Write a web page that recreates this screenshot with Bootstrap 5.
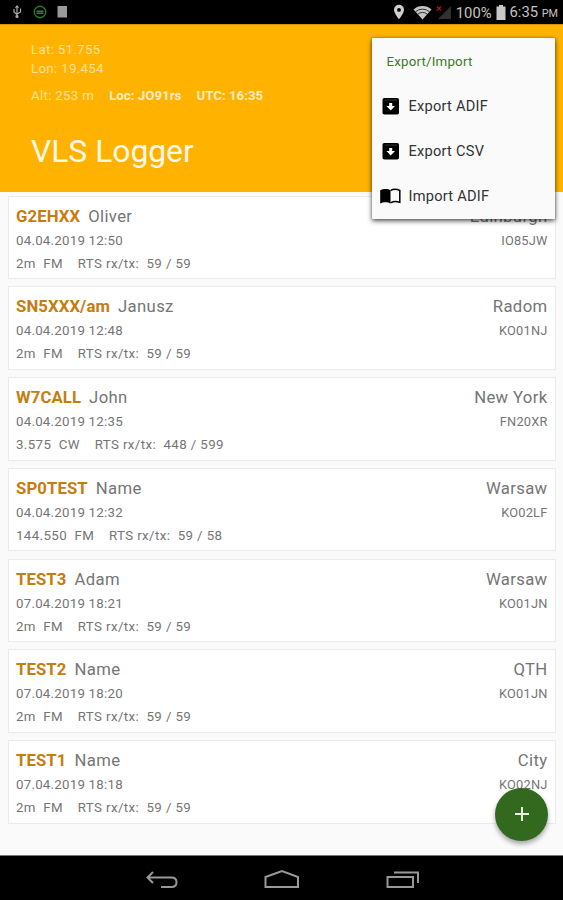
<!DOCTYPE html>
<html lang="en">
<head>
<meta charset="utf-8">
<meta name="viewport" content="width=device-width, initial-scale=1">
<title>VLS Logger</title>
<link href="https://cdn.jsdelivr.net/npm/bootstrap@5.3.0/dist/css/bootstrap.min.css" rel="stylesheet">
<style>
  body { font-family: Roboto, sans-serif; background: #fafafa; height: 900px; overflow: hidden; color: #757575; }
  svg { display: block; flex: none; }
  .statusbar { height: 24px; background: #000; color: #c4c4c4; font-size: 14.8px; line-height: 24px; padding: 0 5px 0 10px; }
  .statusbar .clock { padding-top: 1px; }
  .statusbar .battery-text { padding-top: 1px; }
  .statusbar .pm { font-size: 10.8px; }
  .app-head { height: 168px; background: #ffb300; padding: 15px 31px 0; color: #ffe09a; font-size: 13.3px; line-height: 19px; letter-spacing: .3px; border-top: 1px solid #d39400; }
  .app-head b { font-weight: 700; color: #ffecc0; letter-spacing: 0; }
  .app-head .position-line { margin-top: 8px; gap: 15px; }
  .app-title { font-size: 31.8px; line-height: 38px; color: #fff8e6; font-weight: 400; margin: 27px 0 0; letter-spacing: 0; }
  .log { padding: 3.5px 7.5px 0 8px; gap: 7.2px; height: 663px; }
  .entry { height: 83.6px; flex: none; background: #fff; border: 1px solid #ebebeb; padding: 7px 7px 0; font-size: 13.3px; letter-spacing: .35px; }
  .entry .top-line { font-size: 16.7px; line-height: 25px; }
  .entry .mid-line { line-height: 23px; }
  .entry .mid-line span:first-child { letter-spacing: .23px; }
  .entry .end-line { line-height: 23px; white-space: pre; letter-spacing: .39px; }
  .entry .locator { font-size: 12.8px; letter-spacing: .2px; }
  .call { color: #c67c0e; font-weight: 700; margin-right: 8px; letter-spacing: .12px; }
  .popmenu { left: 371.5px; top: 38px; width: 183.500px; height: 180.5px; background: #fafafa; border-radius: 1px; box-shadow: 0 2px 5px rgba(0,0,0,.65), 0 0 3px rgba(0,0,0,.25); color: #333; z-index: 3; font-size: 14.6px; letter-spacing: .25px; }
  .popmenu .heading { height: 46px; padding: 1px 0 0 15px; color: #3c7a2a; font-size: 13.3px; letter-spacing: .2px; }
  .popmenu .choice { height: 45px; padding-left: 7px; gap: 7px; }
  .popmenu .choice span { padding-top: 1px; }
  .popmenu .choice svg { margin-top: -1px; }
  .fab { left: 495px; top: 787.5px; width: 53px; height: 53px; background: #33691e; z-index: 2; box-shadow: 0 3px 5px rgba(0,0,0,.35); }
  .navkeys { height: 45px; background: #000; border-top: 1px solid #777; }
</style>
<script src="https://cdn.jsdelivr.net/npm/bootstrap@5.3.0/dist/js/bootstrap.bundle.min.js"></script>
</head>
<body class="position-relative d-flex flex-column m-0">
<header class="statusbar d-flex align-items-center">
  <svg width="14" height="14" viewBox="0 0 14 14" fill="none" stroke="#aaa" stroke-width="1.2"><path d="M7 1v11M4 4v3l3 2.5M10.500 3.500v3.500l-3.500 2"/><circle cx="7" cy="11.500" r="1" fill="#aaa"/><path d="M5.500 3 7 1l1.500 2"/></svg>
  <svg class="ms-2" width="16" height="14" viewBox="0 0 16 14" fill="none" stroke="#267a2b" stroke-width="1.400"><circle cx="8" cy="7" r="5.800"/><path d="M4.500 6.200h7M4.500 8.200h7" stroke="#47724a"/></svg>
  <svg class="ms-2" width="12" height="14" viewBox="0 0 12 14"><path d="M1.500 1h9.500v11.500H1.500z" fill="#999"/></svg>
  <svg class="ms-auto" width="12" height="16" viewBox="0 0 12 16"><path d="M6 .8a5 5 0 0 0-5 5C1 9.500 6 15.200 6 15.200s5-5.700 5-9.400a5 5 0 0 0-5-5zm0 3.200a1.900 1.900 0 1 1 0 3.800A1.900 1.900 0 0 1 6 4z" fill="#d0d0d0" fill-rule="evenodd"/></svg>
  <svg class="ms-2" width="19" height="15" viewBox="0 0 19 15"><path d="M.5 4.500a13.500 13.500 0 0 1 18 0L9.500 14.500z" fill="#c4c4c4"/><path d="M2.500 6.800a10.500 10.500 0 0 1 14 0M4.700 9.200a7.400 7.400 0 0 1 9.600 0" fill="none" stroke="#222" stroke-width=".9"/></svg>
  <svg class="ms-1" width="16" height="15" viewBox="0 0 16 15"><path d="M15 1v13H2z" fill="#303030"/><path d="M1 1.500l4 4m0-4-4 4" stroke="#a01818" stroke-width="1.400"/></svg>
  <span class="battery-text ms-1">100%</span>
  <svg class="ms-1" width="10" height="15" viewBox="0 0 10 15"><path d="M3 0h4v1.500h2.500V15H.5V1.500H3z" fill="#c8c8c8"/></svg>
  <span class="clock ms-1">6:35 <span class="pm">PM</span></span>
</header>

<section class="app-head">
  <div>Lat: 51.755</div>
  <div>Lon: 19.454</div>
  <div class="position-line d-flex"><span>Alt: 253 m</span><b>Loc: JO91rs</b><b>UTC: 16:35</b></div>
  <h1 class="app-title">VLS Logger</h1>
</section>

<main class="log d-flex flex-column">
  <article class="entry"><div class="top-line d-flex"><span class="call">G2EHXX</span><span>Oliver</span><span class="ms-auto">Edinburgh</span></div><div class="mid-line d-flex justify-content-between"><span>04.04.2019 12:50</span><span class="locator">IO85JW</span></div><div class="end-line">2m  FM    RTS rx/tx:  59 / 59</div></article>
  <article class="entry"><div class="top-line d-flex"><span class="call">SN5XXX/am</span><span>Janusz</span><span class="ms-auto">Radom</span></div><div class="mid-line d-flex justify-content-between"><span>04.04.2019 12:48</span><span class="locator">KO01NJ</span></div><div class="end-line">2m  FM    RTS rx/tx:  59 / 59</div></article>
  <article class="entry"><div class="top-line d-flex"><span class="call">W7CALL</span><span>John</span><span class="ms-auto">New York</span></div><div class="mid-line d-flex justify-content-between"><span>04.04.2019 12:35</span><span class="locator">FN20XR</span></div><div class="end-line">3.575  CW    RTS rx/tx:  448 / 599</div></article>
  <article class="entry"><div class="top-line d-flex"><span class="call">SP0TEST</span><span>Name</span><span class="ms-auto">Warsaw</span></div><div class="mid-line d-flex justify-content-between"><span>04.04.2019 12:32</span><span class="locator">KO02LF</span></div><div class="end-line">144.550  FM    RTS rx/tx:  59 / 58</div></article>
  <article class="entry"><div class="top-line d-flex"><span class="call">TEST3</span><span>Adam</span><span class="ms-auto">Warsaw</span></div><div class="mid-line d-flex justify-content-between"><span>07.04.2019 18:21</span><span class="locator">KO01JN</span></div><div class="end-line">2m  FM    RTS rx/tx:  59 / 59</div></article>
  <article class="entry"><div class="top-line d-flex"><span class="call">TEST2</span><span>Name</span><span class="ms-auto">QTH</span></div><div class="mid-line d-flex justify-content-between"><span>07.04.2019 18:20</span><span class="locator">KO01JN</span></div><div class="end-line">2m  FM    RTS rx/tx:  59 / 59</div></article>
  <article class="entry"><div class="top-line d-flex"><span class="call">TEST1</span><span>Name</span><span class="ms-auto">City</span></div><div class="mid-line d-flex justify-content-between"><span>07.04.2019 18:18</span><span class="locator">KO02NJ</span></div><div class="end-line">2m  FM    RTS rx/tx:  59 / 59</div></article>
</main>

<footer class="navkeys d-flex justify-content-center">
  <svg width="282" height="44" viewBox="0 0 282 44" fill="none" stroke="#989898" stroke-width="2"><path d="M12 16l-5.500 5.500L12 27M7 21.500h23.500q5 0 5 4.700t-5 4.800H20"/><path d="M124.500 31V21l16.500-6 16 6v10z"/><path d="M246.500 21H272v10h-25.500zM253 16.500h24V27"/></svg>
</footer>

<nav class="popmenu position-absolute">
  <div class="heading d-flex align-items-center">Export/Import</div>
  <div class="choice d-flex align-items-center"><svg width="23" height="20" viewBox="0 0 23 20"><rect x="3.500" y="2" width="16.500" height="16.500" rx="1.800" fill="#000"/><path d="M5.500 4.100h12.500" stroke="#444" stroke-width=".8"/><path d="M10.200 7h3v3h2.800l-4.300 4.500L7.400 10h2.800z" fill="#fff"/></svg><span>Export ADIF</span></div>
  <div class="choice d-flex align-items-center"><svg width="23" height="20" viewBox="0 0 23 20"><rect x="3.500" y="2" width="16.500" height="16.500" rx="1.800" fill="#000"/><path d="M5.500 4.100h12.500" stroke="#444" stroke-width=".8"/><path d="M10.200 7h3v3h2.800l-4.300 4.500L7.400 10h2.800z" fill="#fff"/></svg><span>Export CSV</span></div>
  <div class="choice d-flex align-items-center"><svg width="23" height="20" viewBox="0 0 23 20"><path d="M11.500 4.200C9 2.500 4 2.600 1.200 4.200v13.200c3-1.500 7.800-1.500 10.300 0z" fill="#000"/><path d="M11.500 4.700c2.500-1.600 6.500-1.500 9.300-.2v11.800c-3-1-6.800-.9-9.300.6" fill="none" stroke="#000" stroke-width="1.500"/></svg><span>Import ADIF</span></div>
</nav>

<button class="fab btn rounded-circle position-absolute p-0 border-0 d-flex align-items-center justify-content-center" aria-label="Add entry"><svg width="14" height="14" viewBox="0 0 14 14" stroke="#e8f0e4" stroke-width="2"><path d="M7 0v14M0 7h14"/></svg></button>
</body>
</html>
